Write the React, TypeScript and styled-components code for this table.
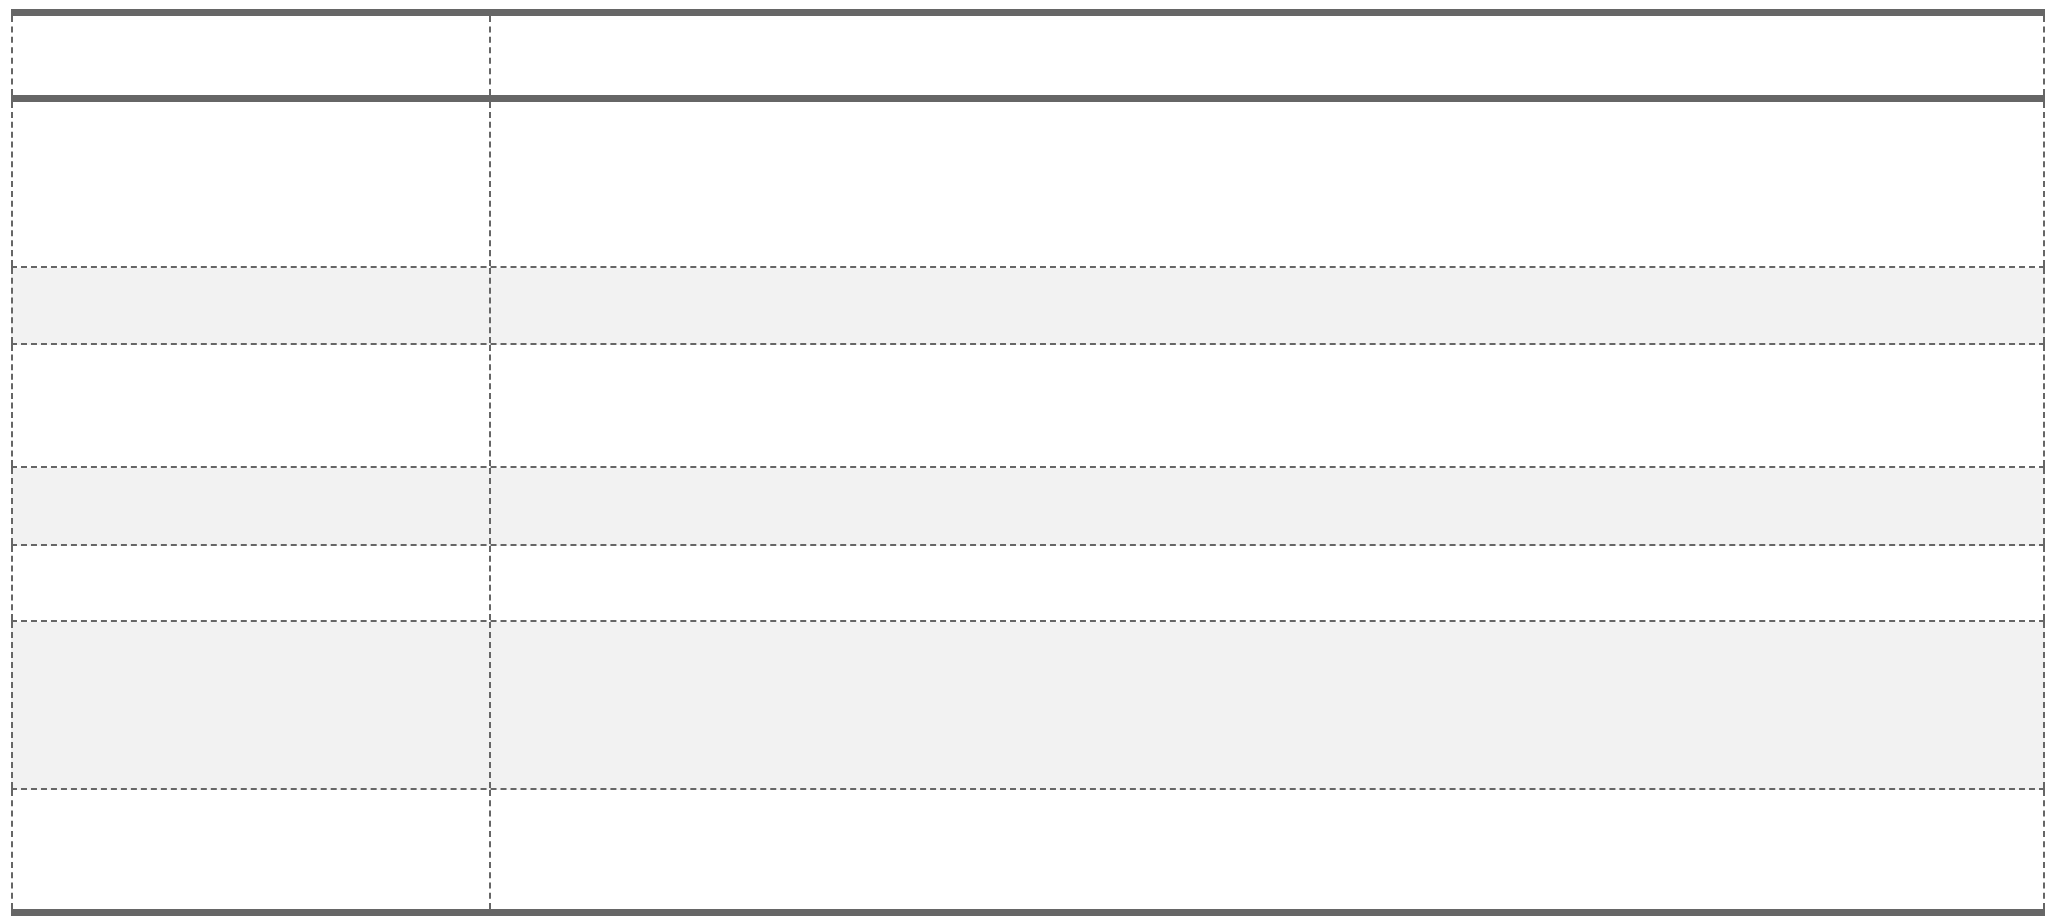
import React from "react";
import styled, { createGlobalStyle } from "styled-components";

const GlobalStyle = createGlobalStyle`
  html, body {
    margin: 0;
    padding: 0;
    background: #fff;
    font-family: "Liberation Sans", Arial, sans-serif;
  }
  * {
    box-sizing: border-box;
  }
`;

const Page = styled.div`
  padding: 9px 11px;
`;

const Sheet = styled.div`
  display: flex;
  flex-direction: column;
  border-top: 7px solid #666;
  border-bottom: 7px solid #666;
`;

const Row = styled.div<{ $h: number; $shade?: boolean; $head?: boolean; $last?: boolean }>`
  display: grid;
  grid-template-columns: 480px 1fr;
  height: ${({ $h }) => $h}px;
  background-color: ${({ $shade }) => ($shade ? "#f2f2f2" : "#fff")};
  border-bottom: ${({ $head, $last }) =>
    $head ? "7px solid #666" : $last ? "none" : "2px dashed #666"};
`;

const Cell = styled.div<{ $first?: boolean }>`
  border-right: 2px dashed #666;
  border-left: ${({ $first }) => ($first ? "2px dashed #666" : "none")};
`;

const rows = [
  { h: 166, shade: false },
  { h: 77, shade: true },
  { h: 123, shade: false },
  { h: 78, shade: true },
  { h: 76, shade: false },
  { h: 168, shade: true },
  { h: 119, shade: false },
];

function App() {
  return (
    <Page>
      <GlobalStyle />
      <Sheet>
        <Row $h={86} $head>
          <Cell $first />
          <Cell />
        </Row>
        {rows.map((r, i) => (
          <Row key={i} $h={r.h} $shade={r.shade} $last={i === rows.length - 1}>
            <Cell $first />
            <Cell />
          </Row>
        ))}
      </Sheet>
    </Page>
  );
}

export default App;
